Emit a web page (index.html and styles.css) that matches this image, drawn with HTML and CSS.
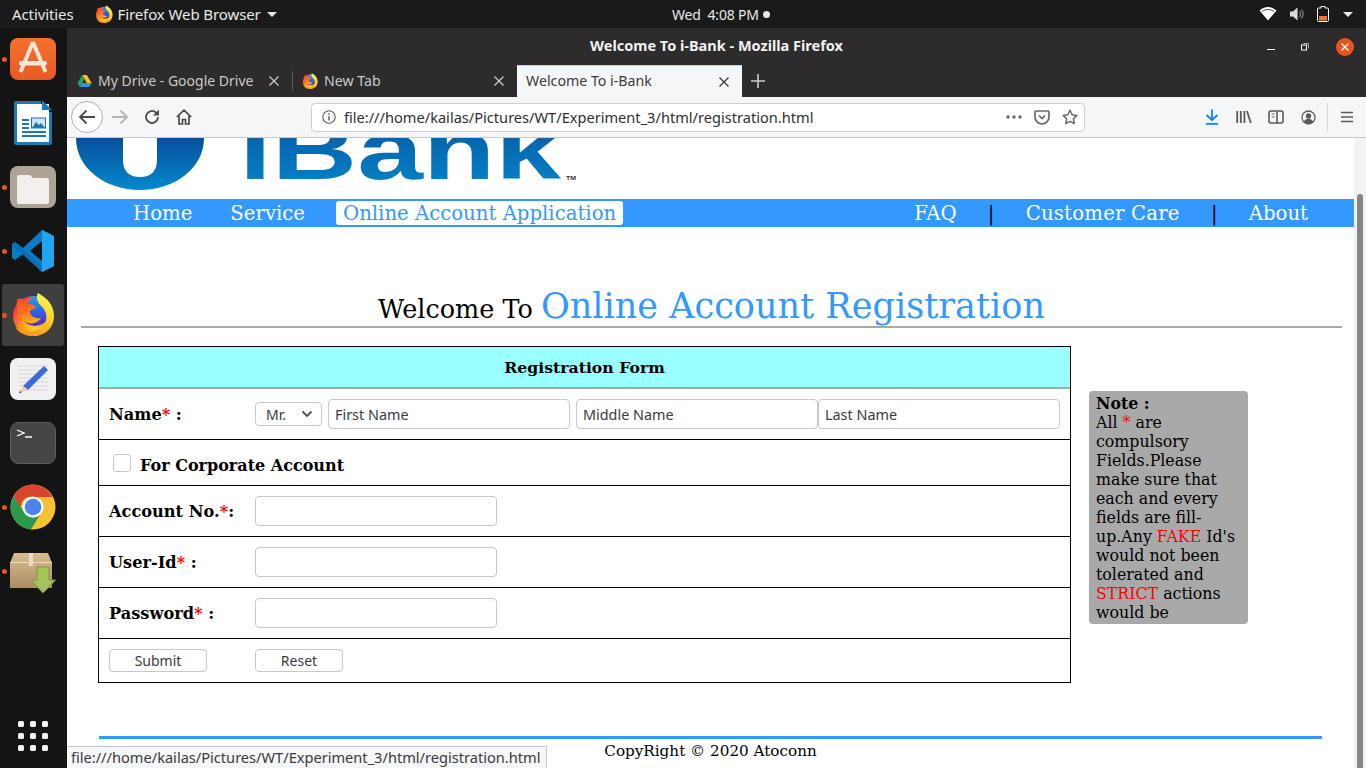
FILE: index.html
```html
<!DOCTYPE html>
<html lang="en">
<head>
    <meta charset="UTF-8">
    <title>Welcome To i-Bank</title>
    <link rel="stylesheet" href="styles.css">
</head>
<body>
    <svg class="defs" width="0" height="0">
        <defs>
            <radialGradient id="fxBody" cx="0.55" cy="0.8" r="0.85">
                <stop offset="0" stop-color="#ffd52b"/>
                <stop offset="0.4" stop-color="#ff9a1f"/>
                <stop offset="0.75" stop-color="#f7423c"/>
                <stop offset="1" stop-color="#e0207a"/>
            </radialGradient>
            <linearGradient id="fxHead" x1="0.2" y1="0" x2="0.6" y2="1">
                <stop offset="0" stop-color="#f2452f"/>
                <stop offset="0.6" stop-color="#ff7a1c"/>
                <stop offset="1" stop-color="#ffb01f"/>
            </linearGradient>
            <linearGradient id="fxTail" x1="0.6" y1="0" x2="0.3" y2="1">
                <stop offset="0" stop-color="#fff44f"/>
                <stop offset="0.6" stop-color="#ffc21f"/>
                <stop offset="1" stop-color="#ff8f1e"/>
            </linearGradient>
            <linearGradient id="fxGlobe" x1="0.5" y1="0" x2="0.5" y2="1">
                <stop offset="0" stop-color="#20a4f0"/>
                <stop offset="0.55" stop-color="#2f5fe0"/>
                <stop offset="1" stop-color="#5a2bb8"/>
            </linearGradient>
            <symbol id="firefox" viewBox="0 0 44 44">
                <circle cx="22" cy="24" r="20" fill="url(#fxBody)"/>
                <circle cx="24" cy="19" r="15" fill="url(#fxGlobe)"/>
                <path d="M6 8c2-2 5-2 7 0 3-2 7-3 11-3-5 2-7 5-7 7 3 0 7 1 8 3-2 3-6 2-6 5 0 4 5 7 11 6-3 5-10 7-16 4C9 27 5 21 6 8z" fill="url(#fxHead)"/>
                <path d="M27 1c9 5 16 12 16 23 0 12-9 20-21 20-8 0-14-3-18-9 7 5 17 6 25 2 6-4 8-11 5-18-2-5-8-7-8-13 0-2 0-4 1-5z" fill="url(#fxTail)"/>
            </symbol>
            <linearGradient id="logoBlue" x1="0" y1="0" x2="0" y2="1">
                <stop offset="0" stop-color="#074f9b"/>
                <stop offset="1" stop-color="#0489cd"/>
            </linearGradient>
            <linearGradient id="softOrange" x1="0" y1="0" x2="0" y2="1">
                <stop offset="0" stop-color="#f4702f"/>
                <stop offset="1" stop-color="#e85a22"/>
            </linearGradient>
            <linearGradient id="boxTan" x1="0" y1="0" x2="0" y2="1">
                <stop offset="0" stop-color="#d9bd93"/>
                <stop offset="1" stop-color="#a98c62"/>
            </linearGradient>
            <symbol id="tabx" viewBox="0 0 10 10">
                <path d="M0.500 0.500l9 9M9.500 0.500l-9 9" stroke="currentColor" stroke-width="1.300"/>
            </symbol>
        </defs>
    </svg>

    <header class="topbar">
        <span class="topbar-item activities">Activities</span>
        <span class="topbar-item app-menu">
            <svg class="fav" width="18" height="18"><use href="#firefox"/></svg>
            Firefox Web Browser
            <span class="caret"></span>
        </span>
        <span class="clock">Wed&nbsp; 4:08 PM <i class="clock-dot"></i></span>
        <span class="tray">
            <svg width="18" height="16" viewBox="0 0 18 16"><path d="M0.500 4.500C3 2.300 5.800 1 9 1s6 1.300 8.500 3.500L9 14.500z" fill="#fff"/><path d="M3 5.500C4.800 4.200 6.800 3.500 9 3.500s4.200 0.700 6 2" fill="none" stroke="#1a1a1a" stroke-width="0.800"/></svg>
            <svg width="16" height="16" viewBox="0 0 16 16"><path d="M1 5.500h3L8.500 1.500v13L4 10.500H1z" fill="#ddd"/><path d="M10.500 5c1.300 1.800 1.300 4.200 0 6M12.500 3.500c2 2.700 2 6.300 0 9" fill="none" stroke="#888" stroke-width="1.200"/></svg>
            <svg class="battery" width="12" height="16" viewBox="0 0 12 16"><path d="M4 0.500h4v1.500h2.500c0.500 0 1 0.500 1 1v11.500c0 0.500-0.500 1-1 1h-9c-0.500 0-1-0.500-1-1V3c0-0.500 0.500-1 1-1H4z" fill="none" stroke="#fff" stroke-width="1"/><rect x="2" y="10" width="8" height="4.500" fill="#f37329"/></svg>
            <span class="caret"></span>
        </span>
    </header>

    <div class="desktop">
        <nav class="dock">
            <div class="dock-item running">
                <svg width="46" height="44" viewBox="0 0 46 44"><rect x="0" y="1" width="46" height="42" rx="8" fill="url(#softOrange)"/><path d="M23 5L10.500 35M23 5l12.500 30" fill="none" stroke="#fbe3d6" stroke-width="4"/><rect x="9" y="24" width="28" height="4.500" rx="2" fill="#fbe3d6"/></svg>
            </div>
            <div class="dock-item">
                <svg width="40" height="48" viewBox="0 0 40 48"><path d="M1 4c0-1 1-2 2-2h25v3H4v38h32V13h3v31c0 1-1 2-2 2H3c-1 0-2-1-2-2z" fill="#1c79b5"/><rect x="4" y="5" width="32" height="38" fill="#fff"/><path d="M29 1l10 10H29z" fill="#1c79b5"/><path d="M9 20h7v2H9zM9 24h7v2H9zM9 28h7v2H9zM9 32h24v2H9zM9 36h24v2H9z" fill="#1c79b5"/><rect x="18.500" y="19" width="14" height="10" fill="#cfe3f0" stroke="#1c79b5"/><path d="M19 29l4-6 3 3 2-2 4 5z" fill="#1c79b5"/></svg>
            </div>
            <div class="dock-item running">
                <svg width="46" height="44" viewBox="0 0 46 44"><rect x="0" y="1" width="46" height="42" rx="8" fill="#aca595"/><path d="M7 12c0-1 1-2 2-2h11l3 3h14c1 0 2 1 2 2v22c0 1-1 2-2 2H9c-1 0-2-1-2-2z" fill="#f2f0ec"/></svg>
            </div>
            <div class="dock-item running">
                <svg width="44" height="44" viewBox="0 0 44 44"><path d="M31 1l12 6v30l-12 6-19-18-8 6-3-2V15l3-2 8 6z" fill="#0a7cc5"/><path d="M31 1l12 6v30l-12 6z" fill="#23a4f0"/><path d="M31 12L19 22l12 10z" fill="#141414"/><path d="M4 13l27 24v6L1 17z" fill="#0e68ab" opacity="0.600"/></svg>
            </div>
            <div class="dock-item running active">
                <svg width="44" height="44"><use href="#firefox"/></svg>
            </div>
            <div class="dock-item">
                <svg width="46" height="44" viewBox="0 0 46 44"><rect x="0" y="1" width="46" height="42" rx="8" fill="#f1f1f1"/><path d="M8 9h30M8 13h30M8 17h30M8 21h30M8 25h30M8 29h30M8 33h30" stroke="#d6d6d6" stroke-width="1"/><path d="M34 9l4 4-20 20-5-4z" fill="#3b6bd6"/><path d="M13 29l5 4-8 3z" fill="#f0cfa0"/><path d="M10 34l1.800 1.300-2.800 1z" fill="#333"/></svg>
            </div>
            <div class="dock-item">
                <svg width="46" height="42" viewBox="0 0 46 42"><rect x="0.500" y="0.500" width="45" height="41" rx="8" fill="#454545" stroke="#5e5e5e"/><path d="M7 8l7 3-7 3" fill="none" stroke="#fff" stroke-width="1.300"/><path d="M15 15h7" stroke="#fff" stroke-width="1.500"/></svg>
            </div>
            <div class="dock-item running">
                <svg width="46" height="46" viewBox="0 0 46 46"><circle cx="23" cy="23" r="22.500" fill="#f6c233"/><path d="M23 0.500A22.500 22.500 0 0 0 3.500 12l10 17.500A10 10 0 0 1 23 13h19.500A22.500 22.500 0 0 0 23 0.500z" fill="#d9442f"/><path d="M3.500 12A22.500 22.500 0 0 0 21 45.400l10.300-17A10 10 0 0 1 14 28z" fill="#2a9b4e"/><circle cx="23" cy="23" r="10.500" fill="#fff"/><circle cx="23" cy="23" r="8.300" fill="#4c82ee"/></svg>
            </div>
            <div class="dock-item running">
                <svg class="box-icon" width="46" height="42" viewBox="0 0 46 42"><path d="M4 1h34l4 10v25H0V11z" fill="url(#boxTan)"/><path d="M0 10.500h42" stroke="#eadcc4" stroke-width="1"/><rect x="19" y="1" width="4" height="13" fill="#eadcc4"/><path d="M27 15h12v13h6.500L33 41 21 28h6z" fill="#a6c25a" stroke="#7f9b3f"/></svg>
            </div>
            <div class="app-grid">
                <i></i><i></i><i></i><i></i><i></i><i></i><i></i><i></i><i></i>
            </div>
        </nav>

        <main class="firefox">
            <div class="titlebar">
                <span class="window-title">Welcome To i-Bank - Mozilla Firefox</span>
                <div class="window-controls">
                    <svg width="10" height="10" viewBox="0 0 10 10"><path d="M1 7.500h8" stroke="#fff" stroke-width="1"/></svg>
                    <svg width="10" height="10" viewBox="0 0 10 10"><rect x="1.500" y="3" width="5" height="5" fill="none" stroke="#fff"/><path d="M3.500 1.500h5v5" fill="none" stroke="#aaa"/></svg>
                    <span class="close-btn"><svg width="10" height="10" viewBox="0 0 10 10"><path d="M1.500 1.500l7 7M8.500 1.500l-7 7" stroke="#fff" stroke-width="1.200"/></svg></span>
                </div>
            </div>

            <div class="tabstrip">
                <div class="tab sep">
                    <svg width="15" height="14" viewBox="0 0 16 14"><path d="M5.500 0.500h5l5 8.500h-5z" fill="#f6c02c"/><path d="M5.500 0.500L0.500 9l2.500 4.500 5-8.700z" fill="#1fa463"/><path d="M3 13.500h10l2.500-4.500H5.500z" fill="#4285f4"/></svg>
                    <span class="tab-label">My Drive - Google Drive</span>
                    <svg class="tab-close" width="10" height="10"><use href="#tabx"/></svg>
                </div>
                <div class="tab">
                    <svg width="16" height="16"><use href="#firefox"/></svg>
                    <span class="tab-label">New Tab</span>
                    <svg class="tab-close" width="10" height="10"><use href="#tabx"/></svg>
                </div>
                <div class="tab tab-active">
                    <span class="tab-label">Welcome To i-Bank</span>
                    <svg class="tab-close" width="10" height="10"><use href="#tabx"/></svg>
                </div>
                <div class="new-tab"><svg width="16" height="16" viewBox="0 0 16 16"><path d="M8 1v14M1 8h14" stroke="#ccc" stroke-width="1.600"/></svg></div>
            </div>

            <div class="toolbar">
                <div class="back-btn"><svg width="18" height="16" viewBox="0 0 18 16"><path d="M17 8H2M8.500 1.500L2 8l6.500 6.500" fill="none" stroke="#4a4a4f" stroke-width="1.800"/></svg></div>
                <div class="tool"><svg width="18" height="16" viewBox="0 0 18 16"><path d="M1 8h15M9.500 1.500L16 8l-6.500 6.500" fill="none" stroke="#b5b5b7" stroke-width="1.800"/></svg></div>
                <div class="tool"><svg width="16" height="16" viewBox="0 0 16 16"><path d="M14 8a6 6 0 1 1-2-4.500L14 5" fill="none" stroke="#4a4a4f" stroke-width="1.800"/><path d="M15 0.500V6.500H9z" fill="#4a4a4f"/></svg></div>
                <div class="tool"><svg width="16" height="16" viewBox="0 0 16 16"><path d="M0.800 8L8 1.200 15.200 8M3 6.500V15h3.500v-4.500h3V15H13V6.500" fill="none" stroke="#4a4a4f" stroke-width="1.700"/></svg></div>
                <div class="urlbar">
                    <svg class="info" width="14" height="14" viewBox="0 0 14 14"><circle cx="7" cy="7" r="6.200" fill="none" stroke="#5a5a5e" stroke-width="1.100"/><path d="M7 6v4.500M7 3.200v1.600" stroke="#5a5a5e" stroke-width="1.400"/></svg>
                    <span class="url">file:///home/kailas/Pictures/WT/Experiment_3/html/registration.html</span>
                    <svg width="16" height="4" viewBox="0 0 16 4"><circle cx="2" cy="2" r="1.700" fill="#6a6a6e"/><circle cx="8" cy="2" r="1.700" fill="#6a6a6e"/><circle cx="14" cy="2" r="1.700" fill="#6a6a6e"/></svg>
                    <svg class="pocket" width="16" height="15" viewBox="0 0 16 15"><path d="M1 2c0-.6.400-1 1-1h12c.6 0 1 .4 1 1v5a7 7 0 0 1-14 0z" fill="none" stroke="#6a6a6e" stroke-width="1.700"/><path d="M5 5.500l3 3 3-3" fill="none" stroke="#6a6a6e" stroke-width="1.700"/></svg>
                    <svg class="star" width="16" height="16" viewBox="0 0 16 16"><path d="M8 1.300l2.100 4.400 4.800.7-3.500 3.400.8 4.800L8 12.300l-4.200 2.300.8-4.800L1.100 6.400l4.800-.7z" fill="none" stroke="#6a6a6e" stroke-width="1.500" stroke-linejoin="round"/></svg>
                </div>
                <div class="toolbar-right">
                    <div class="tool"><svg width="14" height="16" viewBox="0 0 14 16"><path d="M7 0.500v10M1.500 6L7 11l5.500-5M1 14.800h12" fill="none" stroke="#0a84ff" stroke-width="1.800"/></svg></div>
                    <div class="tool"><svg width="16" height="14" viewBox="0 0 16 14"><path d="M1.200 1v12M4.800 1v12M8.400 1v12M11 1l3.800 12" fill="none" stroke="#5a5a5e" stroke-width="1.800"/></svg></div>
                    <div class="tool"><svg width="16" height="14" viewBox="0 0 16 14"><rect x="1" y="1" width="14" height="12" rx="2" fill="none" stroke="#5a5a5e" stroke-width="1.600"/><path d="M9 1v12" stroke="#5a5a5e" stroke-width="1.600"/><path d="M3.500 4h3M3.500 7h3" stroke="#5a5a5e" stroke-width="1.200"/></svg></div>
                    <div class="tool"><svg width="15" height="15" viewBox="0 0 15 15"><circle cx="7.500" cy="7.500" r="6.500" fill="none" stroke="#5a5a5e" stroke-width="1.300"/><circle cx="7.500" cy="6" r="2.700" fill="#5a5a5e"/><path d="M2.800 11.800c1-2 2.700-3 4.700-3s3.700 1 4.700 3c-1.200 1.200-2.900 2-4.700 2s-3.500-.8-4.700-2z" fill="#5a5a5e"/></svg></div>
                    <span class="tool-sep"></span>
                    <div class="tool"><svg width="12" height="12" viewBox="0 0 12 12"><path d="M0 1.500h12M0 6h12M0 10.500h12" stroke="#5a5a5e" stroke-width="1.700"/></svg></div>
                </div>
            </div>

            <div class="viewport">
                <div class="page">
                    <div class="logo">
                        <svg width="520" height="61" viewBox="0 0 520 61">
                            <path d="M9 0H56V22C56 33 62 39 73 39C84 39 90 33 90 22V0H137C137 30 108 52 73 52C38 52 9 30 9 0z" fill="url(#logoBlue)"/>
                            <text x="172" y="41" class="logo-text" textLength="322" lengthAdjust="spacingAndGlyphs" fill="url(#logoBlue)">iBank</text>
                            <text x="499" y="42" class="logo-tm" textLength="10" lengthAdjust="spacingAndGlyphs">TM</text>
                        </svg>
                    </div>

                    <div class="menu">
                        <a class="menu-link">Home</a>
                        <a class="menu-link">Service</a>
                        <a class="menu-link current">Online Account Application</a>
                        <span class="menu-right">
                            <a class="menu-link">FAQ</a>
                            <b class="pipe">|</b>
                            <a class="menu-link care">Customer Care</a>
                            <b class="pipe">|</b>
                            <a class="menu-link">About</a>
                        </span>
                    </div>

                    <h1 class="page-title">Welcome To <span class="blue">Online Account Registration</span></h1>
                    <hr class="rule">

                    <div class="form-area">
                        <form class="reg-form">
                            <div class="form-head">Registration Form</div>
                            <div class="row row-name">
                                <label class="row-label">Name<span class="req">*</span> :</label>
                                <span class="fake-select">Mr.<svg width="12" height="8" viewBox="0 0 12 8"><path d="M1.500 1.500L6 6l4.500-4.500" fill="none" stroke="#4a4a4f" stroke-width="1.800"/></svg></span>
                                <input class="field gap" type="text" placeholder="First Name">
                                <input class="field gap" type="text" placeholder="Middle Name">
                                <input class="field" type="text" placeholder="Last Name">
                            </div>
                            <div class="row row-corp">
                                <span class="check"></span>
                                <label class="row-label corp">For Corporate Account</label>
                            </div>
                            <div class="row">
                                <label class="row-label">Account No.<span class="req">*</span>:</label>
                                <input class="field tall" type="text">
                            </div>
                            <div class="row">
                                <label class="row-label">User-Id<span class="req">*</span> :</label>
                                <input class="field tall" type="text">
                            </div>
                            <div class="row">
                                <label class="row-label">Password<span class="req">*</span> :</label>
                                <input class="field tall" type="password">
                            </div>
                            <div class="row row-btns">
                                <button class="btn btn-submit" type="button">Submit</button>
                                <button class="btn btn-reset" type="button">Reset</button>
                            </div>
                        </form>

                        <aside class="note">
                            <b>Note :</b><br>
                            All <span class="req">*</span> are compulsory Fields.Please make sure that each and every fields are fill-up.Any <span class="req">FAKE</span> Id's would not been tolerated and <span class="req">STRICT</span> actions would be
                        </aside>
                    </div>

                    <footer class="foot">CopyRight &copy; 2020 Atoconn</footer>
                </div>
                <div class="scrollbar"><div class="thumb"></div></div>
                <div class="status">file:///home/kailas/Pictures/WT/Experiment_3/html/registration.html</div>
            </div>
        </main>
    </div>
</body>
</html>
```
FILE: styles.css
```css
* {
    box-sizing: border-box;
}
html, body {
    margin: 0;
    height: 100%;
}
body {
    width: 1366px;
    height: 768px;
    overflow: hidden;
    display: flex;
    flex-direction: column;
    font-family: 'Noto Sans', sans-serif;
    background-color: #fff;
}
.defs {
    position: absolute;
}
svg {
    display: block;
    flex: none;
}

/* --- gnome top bar --- */
.topbar {
    height: 28px;
    flex: none;
    position: relative;
    display: flex;
    align-items: center;
    background-color: #1a1a1a;
    color: #e8e8e8;
    font-size: 15px;
    letter-spacing: -0.1px;
}
.activities {
    margin-left: 12px;
}
.app-menu {
    display: flex;
    align-items: center;
    margin-left: 21px;
}
.fav {
    margin-right: 5px;
}
.caret {
    display: inline-block;
    width: 0;
    height: 0;
    margin-left: 6px;
    border-left: 5px solid transparent;
    border-right: 5px solid transparent;
    border-top: 5px solid #e8e8e8;
}
.clock {
    position: absolute;
    left: 672px;
    display: flex;
    align-items: center;
    gap: 4px;
    font-size: 14px;
    letter-spacing: -0.2px;
}
.clock-dot {
    width: 7px;
    height: 7px;
    border-radius: 50%;
    background-color: #e8e8e8;
}
.tray {
    margin-left: auto;
    margin-right: 13px;
    display: flex;
    align-items: center;
    gap: 12px;
}
.tray .caret {
    margin-left: 2px;
}

/* --- dock --- */
.desktop {
    flex: 1;
    display: flex;
    min-height: 0;
}
.dock {
    width: 67px;
    flex: none;
    display: flex;
    flex-direction: column;
    align-items: center;
    padding-right: 1px;
    background-color: #141414;
}
.dock-item {
    position: relative;
    width: 62px;
    height: 64px;
    flex: none;
    display: flex;
    align-items: center;
    justify-content: center;
    border-radius: 3px;
}
.dock-item svg {
    margin-top: -2px;
}
.dock-item svg.box-icon {
    margin-top: 2px;
}
.dock-item.active {
    height: 62px;
    margin-bottom: 2px;
    background-color: #3f3f3f;
}
.dock-item.running::before {
    content: "";
    position: absolute;
    left: 0;
    top: 29px;
    width: 5px;
    height: 5px;
    border-radius: 50%;
    background-color: #e95420;
}
.app-grid {
    margin-top: auto;
    margin-bottom: 17px;
    display: grid;
    grid-template-columns: repeat(3, 6px);
    gap: 6px;
}
.app-grid i {
    width: 6px;
    height: 6px;
    border-radius: 1.500px;
    background-color: #f2f2f2;
}

/* --- firefox window --- */
.firefox {
    flex: 1;
    min-width: 0;
    display: flex;
    flex-direction: column;
}
.titlebar {
    height: 37px;
    flex: none;
    position: relative;
    display: flex;
    align-items: center;
    justify-content: center;
    padding-bottom: 4px;
    background-color: #2d2b2c;
    color: #f2f2f2;
    font-size: 14.500px;
    font-weight: 700;
}
.window-controls {
    position: absolute;
    right: 12px;
    top: 0;
    height: 100%;
    display: flex;
    align-items: center;
    gap: 24px;
}
.close-btn {
    width: 18px;
    height: 18px;
    margin-left: 2px;
    border-radius: 50%;
    background-color: #e95420;
    display: flex;
    align-items: center;
    justify-content: center;
}
.tabstrip {
    height: 32px;
    flex: none;
    display: flex;
    background-color: #2d2b2c;
    color: #c9c9c9;
    font-size: 14.200px;
}
.tab {
    width: 225px;
    display: flex;
    align-items: center;
    gap: 6px;
    padding: 0 13px 0 10px;
}
.tab.sep {
    position: relative;
    box-shadow: 1px 0 0 #5a5a5a;
    clip-path: inset(6px -1px 6px 0);
}
.tab.sep .tab-label {
    font-size: 14px;
}
.tab-label {
    flex: 1;
    margin-bottom: 2px;
    white-space: nowrap;
    overflow: hidden;
}
.tab-active {
    background-color: #f5f6f7;
    color: #3b3b3f;
    border-top: 1px solid #a9dcf5;
    padding-left: 9px;
}
.new-tab {
    width: 31px;
    display: flex;
    align-items: center;
    justify-content: center;
}
.toolbar {
    height: 41px;
    flex: none;
    display: flex;
    align-items: center;
    padding-left: 4px;
    background-color: #f5f6f7;
    border-bottom: 1px solid #c8c8ca;
}
.back-btn {
    width: 32px;
    height: 32px;
    flex: none;
    margin-right: 1px;
    border: 1px solid #b1b1b3;
    border-radius: 50%;
    background-color: #fff;
    display: flex;
    align-items: center;
    justify-content: center;
}
.tool {
    width: 32px;
    height: 32px;
    flex: none;
    display: flex;
    align-items: center;
    justify-content: center;
}
.urlbar {
    width: 774px;
    height: 29px;
    flex: none;
    margin-left: 111px;
    display: flex;
    align-items: center;
    padding: 0 6px 0 10px;
    background-color: #fff;
    border: 1px solid #cfcfd2;
    border-radius: 4px;
}
.url {
    flex: 1;
    margin-left: 8px;
    margin-bottom: 1px;
    font-size: 14.600px;
    color: #2f2f33;
    white-space: nowrap;
}
.pocket {
    margin-left: 12px;
}
.star {
    margin-left: 12px;
}
.toolbar-right {
    margin-left: 111px;
    display: flex;
    align-items: center;
}
.tool-sep {
    width: 1px;
    height: 28px;
    margin: 0 3px;
    background-color: #d4d4d6;
}

/* --- page --- */
.viewport {
    flex: 1;
    position: relative;
    display: flex;
    min-height: 0;
    overflow: hidden;
    background-color: #fff;
}
.page {
    width: 1287px;
    flex: none;
    font-family: 'DejaVu Serif', serif;
    color: #000;
}
.logo {
    height: 61px;
    overflow: hidden;
}
.logo-text {
    font-family: 'Liberation Sans', sans-serif;
    font-weight: 700;
    font-size: 84px;
}
.logo-tm {
    font-family: 'Liberation Sans', sans-serif;
    font-weight: 700;
    font-size: 6px;
    fill: #333;
}
.menu {
    height: 28px;
    display: flex;
    align-items: center;
    padding-left: 59px;
    background-color: #3399ff;
    font-size: 19.700px;
    color: #fff;
}
.menu-link {
    padding: 1px 7px 0;
    height: 24px;
    line-height: 24px;
    margin-right: 24px;
    white-space: nowrap;
}
.menu-link.current {
    background-color: #fff;
    color: #3399ff;
    border-radius: 3px;
}
.menu-right {
    margin-left: auto;
    margin-right: 39px;
    display: flex;
    align-items: center;
}
.menu-right .menu-link {
    margin-right: 0;
}
.menu-link.care {
    letter-spacing: 0.2px;
}
.pipe {
    width: 55px;
    text-align: center;
    color: #000;
    font-weight: 400;
}
.page-title {
    height: 42px;
    margin: 58px 0 -1px 0;
    padding-left: 2px;
    text-align: center;
    font-size: 25.500px;
    font-weight: 400;
    line-height: 41px;
}
.blue {
    color: #3399ff;
    font-size: 35.100px;
}
.rule {
    margin: 0 12px 0 14px;
    height: 2px;
    border: none;
    background-color: #a9a9a9;
}
.form-area {
    display: flex;
    align-items: flex-start;
    margin-top: 18px;
    padding-left: 31px;
}
.reg-form {
    width: 973px;
    flex: none;
    border: 1px solid #000;
}
.form-head {
    height: 42px;
    line-height: 41px;
    text-align: center;
    background-color: #99ffff;
    border-bottom: 2px solid #a9a9a9;
    font-weight: 700;
    font-size: 15.700px;
}
.row {
    height: 51px;
    display: flex;
    align-items: center;
    padding-left: 10px;
    border-bottom: 1px solid #000;
}
.row-corp {
    height: 46px;
}
.row-btns {
    height: 43px;
    border-bottom: none;
}
.row-label {
    width: 146px;
    flex: none;
    font-weight: 700;
    font-size: 16.200px;
}
.row-label.corp {
    width: auto;
    margin: 6px 0 0 9px;
    font-size: 16px;
}
.req {
    color: #f00;
}
.fake-select {
    width: 67px;
    height: 24px;
    flex: none;
    display: flex;
    align-items: center;
    justify-content: space-between;
    padding: 0 8px 0 10px;
    border: 1px solid #c6c8cc;
    border-radius: 4px;
    font-family: 'Noto Sans', sans-serif;
    font-size: 14px;
    color: #3b3b3f;
}
.field {
    width: 242px;
    height: 30px;
    flex: none;
    padding: 0 6px;
    border: 1px solid #c6c8cc;
    border-radius: 4px;
    background-color: #fff;
    font-family: 'Noto Sans', sans-serif;
    font-size: 14.400px;
}
.field::placeholder {
    color: #3b3b3f;
    opacity: 1;
}
.field.gap {
    margin-left: 6px;
}
.check {
    width: 18px;
    height: 18px;
    flex: none;
    margin: 0 0 -1px 4px;
    border: 1px solid #c6c8cc;
    border-radius: 3px;
}
.btn {
    height: 23px;
    flex: none;
    margin-bottom: 1px;
    padding: 0;
    border: 1px solid #c6c8cc;
    border-radius: 4px;
    background-color: #fff;
    font-family: 'Noto Sans', sans-serif;
    font-size: 14px;
    color: #3b3b3f;
}
.btn-submit {
    width: 98px;
}
.btn-reset {
    width: 88px;
    margin-left: 48px;
}
.note {
    width: 159px;
    flex: none;
    margin: 45px 0 0 18px;
    padding: 3px 7px 2px;
    background-color: #a9a9a9;
    border-radius: 4px;
    font-size: 15.800px;
    line-height: 19px;
}
.foot {
    margin: 53px 32px 0 32px;
    border-top: 3px solid #3399ff;
    text-align: center;
    font-size: 15.200px;
    line-height: 24px;
}
.scrollbar {
    flex: 1;
    position: relative;
    background-color: #f2f3f5;
}
.thumb {
    position: absolute;
    left: 3px;
    top: 56px;
    bottom: 0;
    width: 6px;
    border-radius: 3px 3px 0 0;
    background-color: #858585;
}
.status {
    position: absolute;
    left: 0;
    bottom: 0;
    width: 480px;
    height: 22px;
    line-height: 20px;
    padding-left: 4px;
    background-color: #f5f6f7;
    border-top: 1px solid #c8c8ca;
    border-right: 1px solid #c8c8ca;
    font-size: 14.600px;
    color: #3b3b3f;
    white-space: nowrap;
}
```
